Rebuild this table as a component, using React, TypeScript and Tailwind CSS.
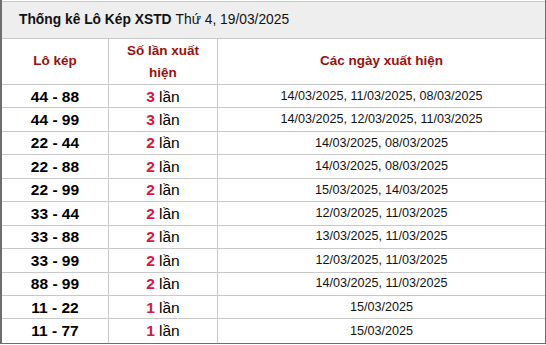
import React from 'react';

const rows = [
  { pair: '44 - 88', count: 3, dates: '14/03/2025, 11/03/2025, 08/03/2025' },
  { pair: '44 - 99', count: 3, dates: '14/03/2025, 12/03/2025, 11/03/2025' },
  { pair: '22 - 44', count: 2, dates: '14/03/2025, 08/03/2025' },
  { pair: '22 - 88', count: 2, dates: '14/03/2025, 08/03/2025' },
  { pair: '22 - 99', count: 2, dates: '15/03/2025, 14/03/2025' },
  { pair: '33 - 44', count: 2, dates: '12/03/2025, 11/03/2025' },
  { pair: '33 - 88', count: 2, dates: '13/03/2025, 11/03/2025' },
  { pair: '33 - 99', count: 2, dates: '12/03/2025, 11/03/2025' },
  { pair: '88 - 99', count: 2, dates: '14/03/2025, 11/03/2025' },
  { pair: '11 - 22', count: 1, dates: '15/03/2025' },
  { pair: '11 - 77', count: 1, dates: '15/03/2025' },
];

export default function App() {
  return (
    <div
      className="w-[546px] h-[345px] bg-white overflow-hidden"
      style={{ fontFamily: '"Liberation Sans", Arial, sans-serif' }}
    >
      <div className="h-[344px] border-l-2 border-r border-b border-[#6e6e6e] pt-px flex flex-col">
        {/* Title */}
        <div className="h-[38px] shrink-0 bg-[#efeeef] border-t border-b border-[#c9c9c9] flex items-center pl-[17px] text-[13.8px] text-[#111]">
          <span className="font-bold">Thống kê Lô Kép XSTD</span>
          <span className="ml-1">Thứ 4, 19/03/2025</span>
        </div>

        {/* Header */}
        <div className="h-[46px] shrink-0 flex border-b border-[#c9c9c9] text-[13.5px] font-bold text-[#9a1010]">
          <div className="w-[107px] border-r border-[#c9c9c9] flex items-center justify-center">Lô kép</div>
          <div className="w-[109px] border-r border-[#c9c9c9] flex items-center justify-center text-center leading-[22px] px-2">
            Số lần xuất hiện
          </div>
          <div className="flex-1 flex items-center justify-center">Các ngày xuất hiện</div>
        </div>

        {/* Rows */}
        {rows.map((r, i) => (
          <div
            key={r.pair}
            className={`h-[23.45px] shrink-0 flex ${i < rows.length - 1 ? 'border-b border-[#c9c9c9]' : ''}`}
          >
            <div className="w-[107px] border-r border-[#c9c9c9] flex items-center justify-center font-bold text-[15.5px] text-black">
              {r.pair}
            </div>
            <div className="w-[109px] border-r border-[#c9c9c9] flex items-center justify-center text-[15.5px] text-black">
              <span className="font-bold text-[#e0123e] mr-1">{r.count}</span>lần
            </div>
            <div className="flex-1 flex items-center justify-center text-[12.6px] text-[#111]">{r.dates}</div>
          </div>
        ))}
      </div>
    </div>
  );
}
